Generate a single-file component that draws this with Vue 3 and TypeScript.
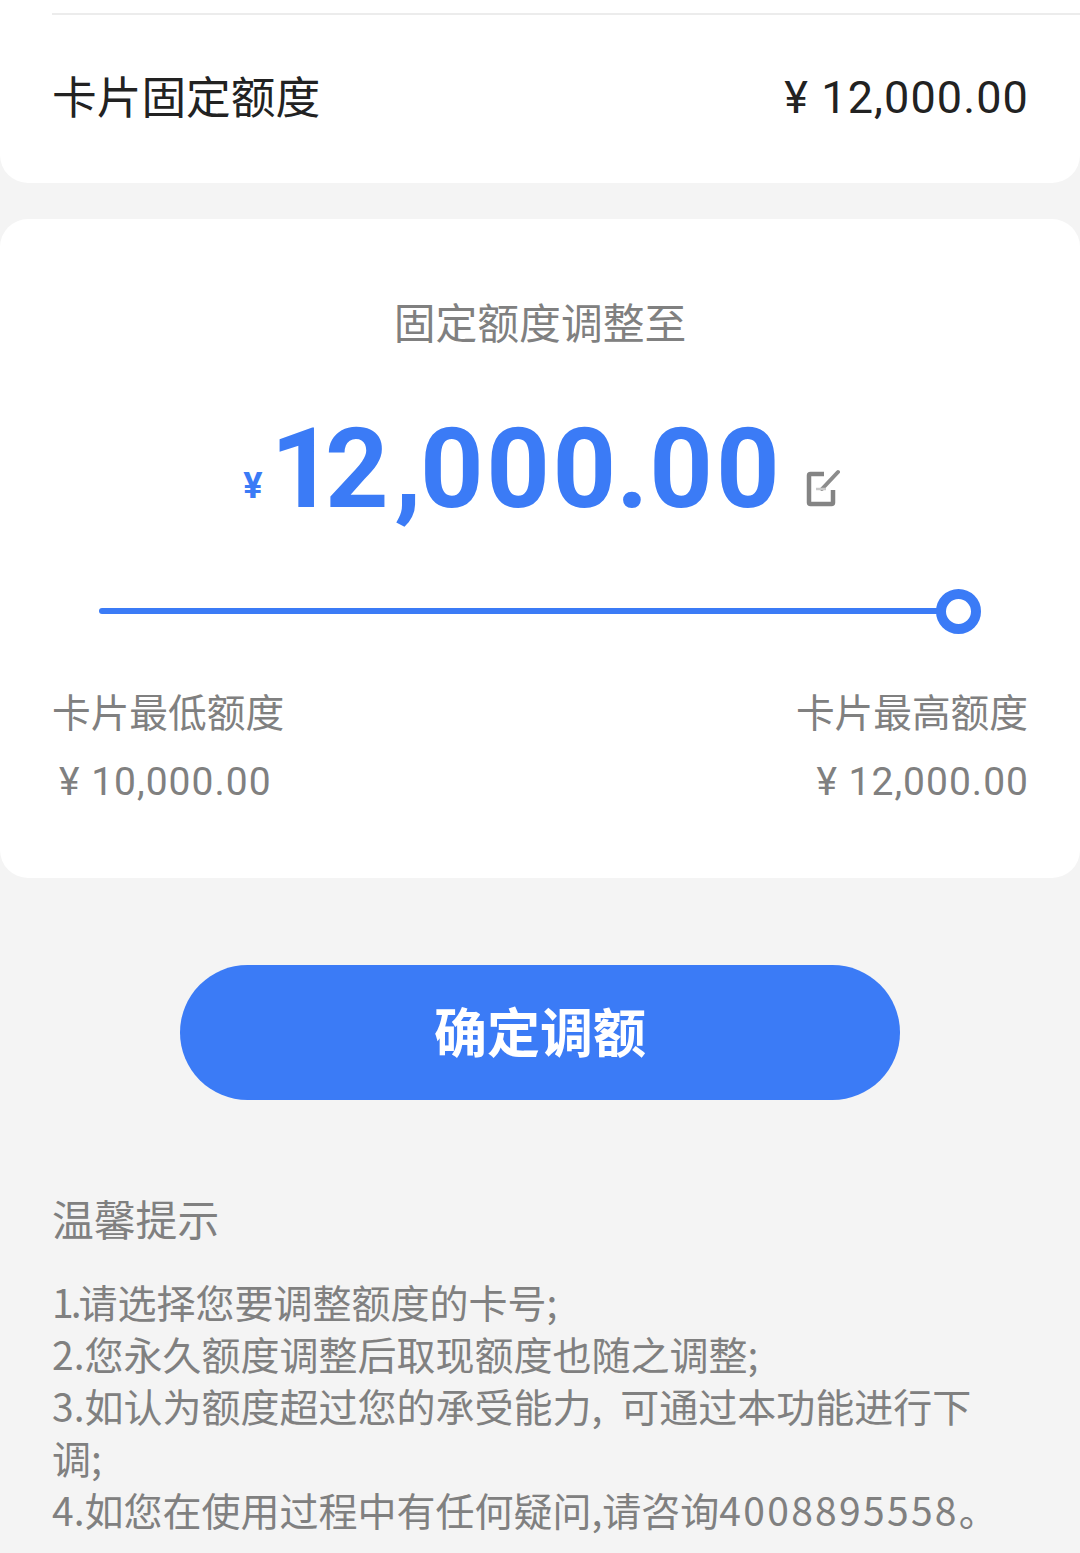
<script setup lang="ts">
interface Segment {
  text: string
  kind?: 'narrow' | 'comma' | 'digits'
}

interface AmountPart {
  text: string
  spacing: number
}

const amountParts: AmountPart[] = [
  { text: '1', spacing: -9.4 },
  { text: '2', spacing: 5.6 },
  { text: ',', spacing: -1.4 },
  { text: '00', spacing: 2.5 },
  { text: '0', spacing: 0 },
  { text: '.', spacing: 1 },
  { text: '0', spacing: 3 },
  { text: '0', spacing: 0 },
]

const tips: Segment[][] = [
  [{ text: '1.', kind: 'narrow' }, { text: '请选择您要调整额度的卡号;' }],
  [{ text: '2.您永久额度调整后取现额度也随之调整;' }],
  [
    { text: '3.如认为额度超过您的承受能力' },
    { text: ',', kind: 'comma' },
    { text: '可通过本功能进行下' },
    { text: '调;' },
  ],
  [
    { text: '4.如您在使用过程中有任何疑问,请咨询' },
    { text: '4008895558', kind: 'digits' },
    { text: '。' },
  ],
]
</script>

<template>
  <main class="page">
    <section class="top-card">
      <div class="divider"></div>
      <div class="fixed-row">
        <span class="fixed-label">卡片固定额度</span>
        <span class="fixed-value">¥ 12,000.00</span>
      </div>
    </section>

    <section class="adjust-card">
      <h2 class="adjust-title">固定额度调整至</h2>
      <div class="amount">
        <span class="amount-sign">¥</span>
        <span class="amount-num"><span v-for="(part, i) in amountParts" :key="i" :style="{ letterSpacing: part.spacing + 'px' }">{{ part.text }}</span></span>
        <svg class="edit" width="36" height="38" viewBox="0 0 36 38" fill="none" aria-hidden="true">
          <path d="M20 5H6.500A1.500 1.500 0 0 0 5 6.500V33.500A1.500 1.500 0 0 0 6.500 35H27.500A1.500 1.500 0 0 0 29 33.500V21" stroke="#848484" stroke-width="4.500" />
          <path d="M18 20 34 3" stroke="#8c8c8c" stroke-width="4" stroke-linecap="round" />
          <path d="M12 20H22" stroke="#c9c9c9" stroke-width="2.500" />
        </svg>
      </div>
      <div class="slider">
        <div class="track"></div>
        <div class="thumb"></div>
      </div>
      <div class="limits">
        <div class="limit">
          <div class="limit-label">卡片最低额度</div>
          <div class="limit-value">¥ 10,000.00</div>
        </div>
        <div class="limit limit-right">
          <div class="limit-label">卡片最高额度</div>
          <div class="limit-value">¥ 12,000.00</div>
        </div>
      </div>
    </section>

    <button class="confirm" type="button"><span class="confirm-text">确定调额</span></button>

    <section class="tips">
      <h3 class="tips-title">温馨提示</h3>
      <p v-for="(tip, i) in tips" :key="i" class="tip"><span v-for="(seg, j) in tip" :key="j" :class="seg.kind">{{ seg.text }}</span></p>
    </section>
  </main>
</template>

<style scoped>
.page {
  width: 1080px;
  height: 1553px;
  overflow: hidden;
  background: #f4f4f4;
  font-family: "Noto Sans CJK SC", "Roboto", sans-serif;
}
.top-card {
  height: 183px;
  background: #fff;
  border-radius: 0 0 28px 28px;
  padding: 13px 0 0 52px;
  box-sizing: border-box;
}
.divider {
  height: 2px;
  background: #ececec;
}
.fixed-row {
  display: flex;
  justify-content: space-between;
  align-items: flex-start;
  padding: 54px 51px 0 0;
}
.fixed-label {
  font-size: 44.700px;
  line-height: 57px;
  margin-top: -3px;
  color: #222;
}
.fixed-value {
  font-family: "Roboto", "Noto Sans CJK SC", sans-serif;
  font-size: 45px;
  line-height: 57px;
  color: #222;
  letter-spacing: 1.100px;
}
.adjust-card {
  margin-top: 36px;
  height: 659px;
  box-sizing: border-box;
  background: #fff;
  border-radius: 28px;
  padding: 74px 52px 0;
}
.adjust-title {
  margin: 0;
  text-align: center;
  font-weight: 400;
  font-size: 41.800px;
  line-height: 56px;
  color: #808080;
}
.amount {
  margin-top: 55px;
  height: 130px;
  padding-left: 3px;
  text-align: center;
  color: #3b7bf6;
  font-family: "Roboto", sans-serif;
  font-weight: 700;
  line-height: 130px;
}
.amount-sign {
  font-size: 36px;
  margin-right: 8px;
  vertical-align: 9px;
}
.amount-num {
  font-size: 111px;
}
.edit {
  margin-left: 24px;
  vertical-align: 0;
}
.slider {
  position: relative;
  height: 46px;
  margin: 54px 47px 0;
}
.track {
  position: absolute;
  left: 0;
  right: 20px;
  top: 20px;
  height: 6px;
  border-radius: 3px;
  background: #3b7bf6;
}
.thumb {
  position: absolute;
  right: 0;
  top: 1px;
  width: 45px;
  height: 45px;
  box-sizing: border-box;
  border: 10px solid #3b7bf6;
  border-radius: 50%;
  background: #fff;
}
.limits {
  display: flex;
  justify-content: space-between;
  margin-top: 51px;
}
.limit-right {
  text-align: right;
}
.limit-label {
  font-size: 38.700px;
  line-height: 50px;
  color: #808080;
}
.limit-value {
  margin-top: 22px;
  font-family: "Roboto", "Noto Sans CJK SC", sans-serif;
  font-size: 39px;
  line-height: 50px;
  color: #808080;
  padding-left: 7px;
  letter-spacing: 1px;
}
.limit-right .limit-value {
  margin-right: -1px;
}
.confirm {
  display: block;
  width: 720px;
  height: 135px;
  margin: 87px auto 0;
  padding: 0 0 6px;
  border: 0;
  border-radius: 68px;
  background: #3b7bf6;
  color: #fff;
  font-family: inherit;
  font-size: 53px;
  font-weight: 700;
}
.tips {
  padding: 0 80px 0 52px;
  margin-top: 90px;
}
.tips-title {
  margin: 0 0 29px;
  font-weight: 400;
  font-size: 41.800px;
  line-height: 56px;
  color: #808080;
}
.tip {
  margin: 0;
  font-size: 39px;
  line-height: 52px;
  color: #808080;
}
.narrow {
  letter-spacing: -3px;
}
.comma {
  letter-spacing: 18px;
}
.digits {
  letter-spacing: 2.300px;
}
</style>
